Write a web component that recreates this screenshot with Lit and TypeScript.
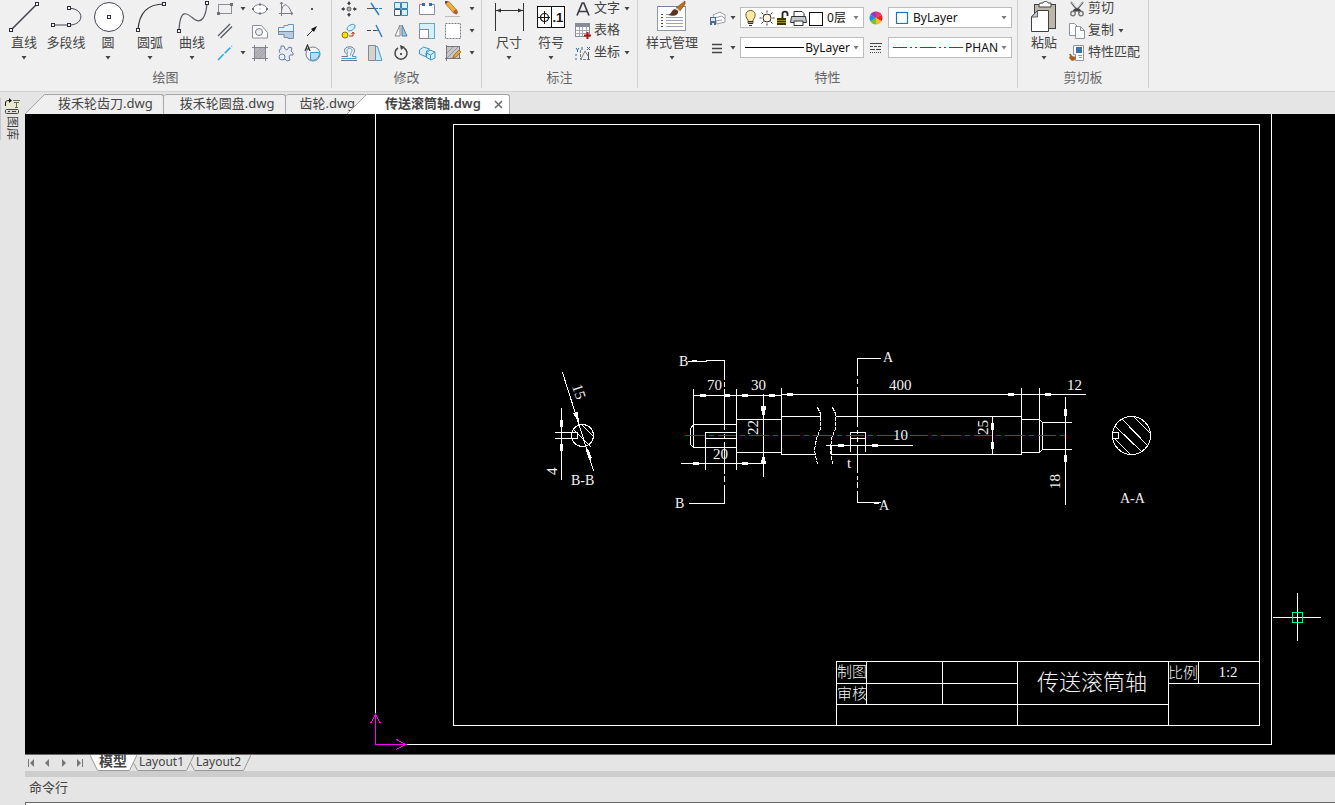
import { LitElement, html, svg, css, nothing, TemplateResult, SVGTemplateResult } from "lit";
import { customElement, property, state } from "lit/decorators.js";
import { classMap } from "lit/directives/class-map.js";

type Art = SVGTemplateResult;

const caret = html`<svg class="caret" width="6" height="4" viewBox="0 0 6 4" aria-hidden="true"><path d="M0.5 0h5L3 3.5z" fill="#444"/></svg>`;

/* ---------- large icons, 34 x 34 ---------- */
const node = (x: number, y: number): Art =>
  svg`<rect x=${x - 1.5} y=${y - 1.5} width="3" height="3" fill="#fff" stroke="#2c2c36"/>`;

const big: Record<string, Art> = {
  line: svg`<path d="M4.500 29.500L29.500 4.500" stroke="#454555" stroke-width="1.6"/>${node(4, 30)}${node(30, 4)}`,
  pline: svg`<path d="M4 25H22M20 8.500h3c12 2 12 15-1 16.500" fill="none" stroke="#454555"/>${node(4, 25)}${node(20, 25)}${node(20, 8)}`,
  circle: svg`<circle cx="18" cy="17" r="14.500" fill="#fff" stroke="#454555"/>${node(18, 17)}`,
  arc: svg`<path d="M5 30C6 14 14 4 31 4" fill="none" stroke="#333" stroke-width="1.200"/>${node(5, 30)}${node(31, 4)}`,
  curve: svg`<path d="M4 31C5 6 13 14 19 19c7 5 12-1 13-16" fill="none" stroke="#555566" stroke-width="1.200"/>${node(4, 31)}${node(32, 3)}`,
  dim: svg`<path d="M3.500 3V31M31.500 3V31M4 10.500H31" stroke="#333" /><path d="M4 10.500l5-2v4zM31 10.500l-5-2v4z" fill="#333"/>`,
  symbol: svg`<rect x="3.500" y="6.500" width="27" height="21" fill="#fff" stroke="#111"/><path d="M17.500 7V27M4 17.500H16M10.500 11V24" stroke="#111"/><circle cx="10.500" cy="17.500" r="4" fill="none" stroke="#111" stroke-width="1.200"/><text x="18.500" y="22" font-family="Liberation Sans" font-weight="bold" font-size="13" fill="#111">.1</text>`,
  style: svg`<rect x="2.500" y="6.500" width="28" height="24" fill="#fff" stroke="#8a98ac"/><path d="M3 6.500H30" stroke="#6f83a0"/><path d="M6 14.500H8M6 17.500H8M6 20.500H8M6 23.500H8M6 26.500H8" stroke="#3b4b70"/><path d="M11 14.500H19M11 17.500H28M11 20.500H28M11 23.500H28M11 26.500H28" stroke="#98a3bb"/><path d="M30 1L21 8l4 3 5-7z" fill="#c07020" stroke="#70380c" stroke-width=".6"/><path d="M22 8l3 3-2 1-3-3z" fill="#d8d8d8"/><path d="M20 9c-4 1-3 5-7 6 6 2 11 0 10-4z" fill="#5a3420"/>`,
  paste: svg`<rect x="7.500" y="4.500" width="21" height="24" fill="#beb6a6" stroke="#3b4048"/><path d="M14 3h2c0-2 5-2 5 0h3v4H12V4z" fill="#fff" stroke="#3b4048"/><path d="M10.500 10.500H21.500V31.500H4.500V17z" fill="#fff" stroke="#3b4048"/><path d="M10.500 10.500V17H4.500z" fill="#ccc" stroke="#3b4048" stroke-width=".8"/>`,
};

/* ---------- small icons, 18 x 18 ---------- */
const small: Record<string, Art> = {
  rect: svg`<rect x="2.500" y="4.500" width="13" height="9" fill="none" stroke="#8a8f9a"/><path d="M1 12h3v3H1zM14 3h3v3h-3z" fill="#6b707c"/>`,
  ellipse: svg`<ellipse cx="9" cy="9" rx="7" ry="4.500" fill="#fff" stroke="#7e8390"/><path d="M8 3.500h2v2H8zM8 12.500h2v2H8zM1 8h2v2H1zM15 8h2v2h-2z" fill="#6a6f7c"/><path d="M8.500 9h1" stroke="#888"/>`,
  graph: svg`<path d="M4.500 2V16M2 13.500H16" stroke="#777c88"/><path d="M4.500 11C6 2 11 3 14.500 13M3 4l1.500-2L6 4M14 12l2 1.500-2 1.500" fill="none" stroke="#777c88"/>`,
  point: svg`<rect x="8" y="8" width="2" height="2" fill="#555"/>`,
  parallel: svg`<path d="M2 14L14 2M4.500 16L16 4.500" stroke="#555a66" stroke-width="1.300"/>`,
  contour: svg`<path d="M1.500 3.500h9l6 7v5.500h-15z" fill="#fff" stroke="#8a8f9c"/><circle cx="8" cy="10" r="3.500" fill="#eee" stroke="#777c88"/>`,
  shaft: svg`<path d="M1 5h6V3h4v13H7v-3H1zM11 2h6v15h-6z" fill="#e3f3fc"/><path d="M1 10h6v3H1zM7 10h4v6H7zM11 10h6v6h-6z" fill="#b9cbe0"/><path d="M1.500 5.500h5.500v-2h4V2.500h5.500v14H11v-1H7v-3H1.500z" fill="none" stroke="#7690ae"/><path d="M1 9.500H17" stroke="#2f9fe0"/>`,
  arrow: svg`<path d="M4 14l6-6" stroke="#333"/><path d="M14 4L8 7l3 3z" fill="#111"/>`,
  xline: svg`<path d="M2 16L16 2" stroke="#2ba6de" stroke-width="1.500" stroke-dasharray="8 1.500"/>`,
  hatch: svg`<rect x="3" y="3" width="12" height="12" fill="#b4b4b8"/><path d="M3.500 1v16M14.500 1v16M1 3.500h16M1 14.500h16" stroke="#808490"/><path d="M4 10l6-6M4 14L14 4M8 14l6-6" stroke="#999" stroke-width=".7"/>`,
  gear: svg`<path d="M2 6l2-1V2h3l1 3 2 1 2-3 3 1-1 3 2 2v2l-3 0-1 2 1 3-3 1-2-2-2 1" fill="#e9edf6" stroke="#6f7f9f"/><path d="M2 6l1 3" stroke="#6f7f9f"/><circle cx="5" cy="13" r="3" fill="#e8f2fa" stroke="#6f7f9f"/>`,
  region: svg`<circle cx="10" cy="10" r="7" fill="#f4f4f4" stroke="#777c88"/><path d="M7.500 8.500h9c0 5-4 9-9 7.500z" fill="#b9def3" stroke="#3a9cd0"/><path d="M2 7l2.500-6L7 7M3 5h3" fill="none" stroke="#333" stroke-width="1.200"/>`,

  move: svg`<circle cx="9" cy="9" r="2" fill="#aaa" stroke="#666"/><path d="M9 2v3M9 13v3M2 9h3M13 9h3" stroke="#3c414c" stroke-width="1.600"/><path d="M7 4l2-3 2 3zM7 14l2 3 2-3zM4 7L1 9l3 2zM14 7l3 2-3 2z" fill="#3c414c"/>`,
  trim: svg`<path d="M1 8.500h7" stroke="#555"/><path d="M9 8.500h8" stroke="#2b7cc6" stroke-dasharray="3 1"/><path d="M5 3l8 12" stroke="#2b7cc6" stroke-width="1.400"/>`,
  array: svg`<path d="M2.500 2.500h6v6h-6zM9.500 2.500h6v6h-6zM9.500 9.500h6v6h-6z" fill="#d5effb" stroke="#3a84b4"/><path d="M2.500 9.500h6v6h-6z" fill="#fff" stroke="#456"/>`,
  breakIt: svg`<path d="M5 4.500H1.500v10h15v-10H13" fill="#fff" stroke="#878c98"/><path d="M4 3h3v3H4zM11 3h3v3h-3z" fill="#2277bb"/>`,
  erase: svg`<path d="M2 2l3-.5 8 9-3 3-8-9z" fill="#f2a93b" stroke="#9d6a1c" stroke-width=".7"/><path d="M1 1l3 .5-2.500 2.500z" fill="#333"/><path d="M9 12l3-3 2 3c0 2-2 3-3 2z" fill="#b2603a"/><path d="M1 16.500h15" stroke="#bbb"/>`,
  copy: svg`<circle cx="5" cy="13" r="3" fill="#f6e200" stroke="#92760a"/><path d="M7 7c0-4 9-7 8-2-1 3-7 6-8 2z" fill="#d5effb" stroke="#3f94c8"/><path d="M9 14h4v-3" fill="none" stroke="#b2382a"/><path d="M11.500 12l1.500-2 1.500 2" fill="none" stroke="#b2382a"/>`,
  extend: svg`<path d="M1 8.500h4M7 8.500h3" stroke="#444"/><path d="M10 8.500h3" stroke="#2b7cc6"/><path d="M10 3l6 12" stroke="#2b7cc6" stroke-width="1.400"/>`,
  mirror: svg`<path d="M8 3v11H3z" fill="#f8f8f8" stroke="#888"/><path d="M10 3v11h5z" fill="#9cc9e8" stroke="#4c7fa6"/>`,
  scale: svg`<rect x="1.500" y="1.500" width="15" height="15" fill="#d5effb" stroke="#5aaad2"/><rect x="1.500" y="7.500" width="9" height="9" fill="#fff" stroke="#888"/>`,
  marquee: svg`<rect x="1.500" y="1.500" width="15" height="15" fill="#fff" stroke="#777c88" stroke-dasharray="2 1"/>`,
  offset: svg`<path d="M1 16.500h16M1.500 12.500h6c0-3-3-3-3-6 0-5 10-5 10 0 0 3-2 3-2 6" fill="none" stroke="#6f7684"/><path d="M12.500 12.500H16v2H1.500M7 10c1-2 0-2 0-3.500 0-3 5-3 5 0 0 2-1.500 2-1.500 5" fill="none" stroke="#4b9fd2"/>`,
  chamfer: svg`<path d="M2.500 1.500h7v15h-7z" fill="#d3d3d3" stroke="#888"/><path d="M9.500 2.500h2l4.500 14H9.500" fill="#c8e8f8" stroke="#4b9fd2"/><path d="M9.500 1.500v15" stroke="#888"/>`,
  rotate: svg`<path d="M6 4a6 6 0 1 0 6 0" fill="none" stroke="#444" stroke-width="1.500"/><path d="M8 1l5 2-4 3z" fill="#444"/><path d="M8 9h2v2H8z" fill="#555"/>`,
  solid: svg`<path d="M1.500 6l4-3 6 2-3 2v6l-7-3zM8 9l4-3 5 2v6l-4 2-5-3z" fill="#d5effb" stroke="#3f94c8"/><path d="M8.500 9l4 2v5M12.500 11l4-3" fill="none" stroke="#3f94c8"/>`,
  editHatch: svg`<rect x="2.500" y="2.500" width="13" height="12" fill="#c4c6ca" stroke="#777"/><path d="M3 9l6-6M3 14L14 3M8 14l6-6" stroke="#999"/><path d="M2.500 1v16M1 14.500h16" stroke="#777"/><path d="M15 6l2 2-5 5-3 1 1-3z" fill="#e8a03a" stroke="#865514" stroke-width=".6"/>`,

  text: svg`<path d="M3 15.500L8.200 3h1.600L15 15.500M5 11.500h8" fill="none" stroke="#3c3c46" stroke-width="1.700"/>`,
  table: svg`<rect x="1.500" y="1.500" width="14" height="13" fill="#fff" stroke="#888c98"/><path d="M2 3.500h13" stroke="#888c98" stroke-width="3"/><path d="M2 8.500h13M2 11.500h13M5.500 5v9M8.500 5v9M12.500 5v9" stroke="#a4a8b2"/><path d="M10 13.500h7M13.500 10v7" stroke="#b01818" stroke-width="2"/>`,
  coord: svg`<path d="M6.500 6v9.500h10" fill="none" stroke="#777c88" stroke-dasharray="3 1"/><path d="M7 15l4-8 3 5" fill="none" stroke="#777c88"/><path d="M2 4l1.500 2L5 4M3.500 6v2M8 3v3M13 3l3 3M16 3l-3 3M2 10v2M2 14v2" fill="none" stroke="#2c6aa6"/><path d="M14.500 8v8" stroke="#555" fill="none"/>`,

  layers: svg`<path d="M5 6l7-3 5 3v7l-8 2z" fill="#fff" stroke="#9a9eaa"/><path d="M6 9l8-2 3 3M7 12l7-1" fill="none" stroke="#9a9eaa"/><rect x="2" y="8" width="6" height="8" fill="#4d6b92"/><path d="M3 9h4v3H3zM4 14h2v2H4z" fill="#dfe8f2"/>`,
  weight: svg`<path d="M4 5.500h10M4 9.500h10M4 13.500h10" stroke="#444" stroke-width="1.300"/>`,
  wheel: svg`<path d="M9 9V2.500A6.500 6.500 0 0 1 14.600 5.750z" fill="#e83a6a"/><path d="M9 9l5.600-3.250a6.500 6.500 0 0 1 0 6.500z" fill="#ee2020"/><path d="M9 9l5.600 3.250A6.500 6.500 0 0 1 9 15.500z" fill="#f4c020"/><path d="M9 9v6.500a6.500 6.500 0 0 1-5.600-3.250z" fill="#7cc02c"/><path d="M9 9l-5.600 3.250a6.500 6.500 0 0 1 0-6.500z" fill="#1f8fd6"/><path d="M9 9L3.400 5.750A6.500 6.500 0 0 1 9 2.500z" fill="#8a3cc4"/>`,
  linetype: svg`<path d="M3 4.500h12" stroke="#444"/><path d="M3 7.500h12" stroke="#444" stroke-dasharray="3 1"/><path d="M3 10.500h12" stroke="#444" stroke-dasharray="5 1"/><path d="M3 13.500h12" stroke="#444" stroke-dasharray="1 1"/>`,

  cut: svg`<path d="M3 2l8 10M15 2L7 12" stroke="#5a5f6a" stroke-width="2"/><path d="M3.500 2l6 7M14.500 2l-6 7" stroke="#eee" stroke-width=".8"/><circle cx="5" cy="13.500" r="2.200" fill="none" stroke="#777" stroke-width="1.400"/><circle cx="13" cy="13.500" r="2.200" fill="none" stroke="#777" stroke-width="1.400"/><path d="M6 9l3-1 3 1 1 2H5z" fill="#444"/>`,
  duplicate: svg`<path d="M1.500 1.500h5l3 3v9h-8z" fill="#fff" stroke="#8e939e"/><path d="M7.500 4.500h5l4 4v8h-9z" fill="#fff" stroke="#8e939e"/><path d="M12.500 4.500v4h4" fill="none" stroke="#8e939e"/>`,
  match: svg`<path d="M5.500 1.500h10v15h-8v-6h-2z" fill="#fff" stroke="#8e939e"/><path d="M8 3h6v6H8z" fill="#3d73ad"/><path d="M10 11.500h4M11 13.500h3" stroke="#8e939e"/><path d="M1 10l2 0 1 2 4 1-1 3-3 1-3-3 1-2z" fill="#a8641c"/>`,
};

const sicon = (name: string) =>
  html`<svg width="18" height="18" viewBox="0 0 18 18" fill="none" aria-hidden="true">${small[name]}</svg>`;

const shared = css`
  :host { font-family: "Noto Sans", "Noto Sans CJK SC", sans-serif; font-size: 13px; color: #444; }
  * { box-sizing: border-box; }
  svg { display: block; flex: none; }
  button { font: inherit; color: inherit; background: none; border: 0; padding: 0; margin: 0; cursor: default; }
`;

/* ---------- ribbon ---------- */
@customElement("ribbon-panel")
class RibbonPanel extends LitElement {
  @property() label = "";
  static styles = [shared, css`
    :host { display: flex; flex-direction: column; border-right: 1px solid #d2d2d2; flex: none; }
    .body { display: flex; height: 62px; }
    .title { line-height: 18px; padding-top: 6px; text-align: center; color: #666; }
  `];
  render() {
    return html`<div class="body"><slot></slot></div><div class="title">${this.label}</div>`;
  }
}

@customElement("cad-ribbon")
class CadRibbon extends LitElement {
  static styles = [shared, css`
    :host { display: flex; height: 92px; padding-bottom: 3px; background: #f0f0f0; border-bottom: 1px solid #d2d2d2; overflow: hidden; }
    .big { width: 42px; display: flex; flex-direction: column; align-items: center; line-height: 17px; white-space: nowrap; }
    .big.wide { width: 54px; }
    .big .caret { margin-top: 5px; }
    .lead3 { padding-left: 3px; }
    .lead5 { padding-left: 5px; }
    .lead6 { padding-left: 6px; }
    .lead7 { padding-left: 7px; }
    .row { display: flex; }
    .grid { display: grid; grid-auto-rows: 18px; row-gap: 4px; }
    .draw { grid-template-columns: 18px 17px 26px 26px 28px; padding-left: 3px; }
    .edit { grid-template-columns: 26px 26px 26px 26px 18px 19px; padding-left: 8px; }
    .drop { display: flex; align-items: center; justify-content: center; }
    .list { display: flex; flex-direction: column; gap: 4px; padding: 0 8px 0 3px; }
    .list.notes { padding: 0 7px 0 2px; }
    .item { display: flex; align-items: center; height: 18px; gap: 2px; white-space: nowrap; }
    .item span { line-height: 14px; padding-bottom: 4px; }
    .item .caret { margin-left: 2px; }
    .props { display: grid; grid-template-columns: 18px 14px 124px 24px 124px; grid-auto-rows: 21px; row-gap: 9px; align-items: center; padding: 7px 5px 0 9px; }
    .mid { display: flex; justify-content: center; }
    .field { display: flex; align-items: center; height: 21px; background: #fff; border: 1px solid #bcbcbc; padding: 0 4px; color: #111; font-size: 12px; }
    .field .caret { opacity: .7; }
    select { appearance: none; flex: 1; min-width: 0; border: 0; background: none; font: inherit; color: inherit; padding: 0; margin: 0; }
    select.start { padding-left: 2px; }
    select.end { text-align: right; text-align-last: right; padding-right: 3px; }
  `];

  private big(icon: string, label: string, drop = true, wide = false) {
    return html`<button class=${classMap({ big: true, wide })}>
      <svg width="34" height="34" viewBox="0 0 34 34" aria-hidden="true">${big[icon]}</svg>
      <span>${label}</span>${drop ? caret : nothing}</button>`;
  }
  private tool(icon: string, label: string) {
    return html`<button aria-label=${label}>${sicon(icon)}</button>`;
  }
  private drop(show = true) {
    return show ? html`<button class="drop" aria-label="更多">${caret}</button>` : html`<span></span>`;
  }
  private item(icon: string, label: string, drop = false) {
    return html`<button class="item">${sicon(icon)}<span>${label}</span>${drop ? caret : nothing}</button>`;
  }

  render() {
    return html`
      <ribbon-panel label="绘图">
        <div class="row lead3">
          ${this.big("line", "直线")}${this.big("pline", "多段线", false)}${this.big("circle", "圆")}${this.big("arc", "圆弧")}${this.big("curve", "曲线")}
        </div>
        <div class="grid draw">
          ${this.tool("rect", "矩形")}${this.drop()}${this.tool("ellipse", "椭圆")}${this.tool("graph", "函数")}${this.tool("point", "点")}
          ${this.tool("parallel", "平行线")}${this.drop(false)}${this.tool("contour", "轮廓")}${this.tool("shaft", "轴")}${this.tool("arrow", "箭头")}
          ${this.tool("xline", "中心线")}${this.drop()}${this.tool("hatch", "填充")}${this.tool("gear", "齿轮")}${this.tool("region", "局部")}
        </div>
      </ribbon-panel>
      <ribbon-panel label="修改">
        <div class="grid edit">
          ${this.tool("move", "移动")}${this.tool("trim", "裁剪")}${this.tool("array", "阵列")}${this.tool("breakIt", "打断")}${this.tool("erase", "删除")}${this.drop()}
          ${this.tool("copy", "复制")}${this.tool("extend", "延伸")}${this.tool("mirror", "镜像")}${this.tool("scale", "缩放")}${this.tool("marquee", "选择")}${this.drop()}
          ${this.tool("offset", "等距")}${this.tool("chamfer", "倒角")}${this.tool("rotate", "旋转")}${this.tool("solid", "分解")}${this.tool("editHatch", "编辑填充")}${this.drop()}
        </div>
      </ribbon-panel>
      <ribbon-panel label="标注">
        <div class="row lead6">${this.big("dim", "尺寸")}${this.big("symbol", "符号")}</div>
        <div class="list notes">${this.item("text", "文字", true)}${this.item("table", "表格")}${this.item("coord", "坐标", true)}</div>
      </ribbon-panel>
      <ribbon-panel label="特性">
        <div class="row lead7">${this.big("style", "样式管理", true, true)}</div>
        <div class="props">
          ${this.tool("layers", "图层")}${this.drop()}
          <div class="field">
            <svg width="80" height="18" viewBox="0 0 80 18" aria-hidden="true">
              <path d="M3 11C-1 6 1 1.500 5.500 1.500S12 6 8 11v3H3z" fill="#fdeaa0" stroke="#6b5836"/><path d="M3 12.500h5M3 14.500h5M4 16.500h3" stroke="#333"/>
              <circle cx="22" cy="9" r="4" fill="#fff6dd" stroke="#333"/><path d="M22 1.500v2M22 14.500v2M14.500 9h2M27.500 9h2M16.500 3.500l2 2M25.500 12.500l2 2M16.500 14.500l2-2M25.500 5.500l2-2" stroke="#333"/>
              <path d="M32 9h9v7h-9z" fill="#3c3500"/><path d="M32 11.500h9M32 13.500h9" stroke="#9c8c20"/><path d="M37.500 9V4.500c0-2.500 5-2.500 5 0V7" fill="none" stroke="#222" stroke-width="1.800"/>
              <path d="M49 7V2.500h8l2 2V7" fill="#fff" stroke="#333"/><path d="M46.500 7.500h14l1 6h-16z" fill="#c5c9d0" stroke="#333"/><path d="M49 12h9v4.500h-9z" fill="#fff" stroke="#333"/>
              <rect x="64.500" y="3.500" width="13" height="13" fill="#fff" stroke="#111"/>
            </svg>
            <select class="start" aria-label="当前图层"><option>0层</option></select>${caret}
          </div>
          <span class="mid">${this.tool("wheel", "颜色")}</span>
          <div class="field">
            <svg width="18" height="13" viewBox="0 0 18 13" aria-hidden="true"><rect x="3.500" y="1.500" width="11" height="11" fill="#fff" stroke="#1477cc" stroke-width="1.200"/></svg>
            <select class="start" aria-label="颜色"><option>ByLayer</option></select>${caret}
          </div>
          ${this.tool("weight", "线宽")}${this.drop()}
          <div class="field">
            <svg width="59" height="1" viewBox="0 0 59 1" aria-hidden="true"><path d="M0 .5h59" stroke="#000"/></svg>
            <select class="end" aria-label="线宽"><option>ByLayer</option></select>${caret}
          </div>
          <span class="mid">${this.tool("linetype", "线型")}</span>
          <div class="field">
            <svg width="70" height="1" viewBox="0 0 70 1" aria-hidden="true"><path d="M0 .5h14m3 0h2m3 0h2m3 0h16m3 0h2m3 0h2m3 0h14" stroke="#f00000"/></svg>
            <select class="end" aria-label="线型"><option>PHAN</option></select>${caret}
          </div>
        </div>
      </ribbon-panel>
      <ribbon-panel label="剪切板">
        <div class="row lead5">${this.big("paste", "粘贴")}</div>
        <div class="list">${this.item("cut", "剪切")}${this.item("duplicate", "复制", true)}${this.item("match", "特性匹配")}</div>
      </ribbon-panel>`;
  }
}

/* ---------- drawing ---------- */
const hArrow = (x: number, y: number) => svg`<rect x=${x} y=${y - 1} width="6" height="3"/>`;
const vArrow = (x: number, y: number) => svg`<rect x=${x - 1} y=${y} width="3" height="7"/>`;

@customElement("cad-drawing")
class CadDrawing extends LitElement {
  static styles = css`
    :host { display: block; background: #000; overflow: hidden; min-height: 0; }
    svg { display: block; width: 100%; height: 100%; }
    .ink { fill: none; stroke: #fff; stroke-linecap: square; shape-rendering: crispEdges; }
    .dashed { stroke-linecap: butt; stroke-dasharray: 4 1; }
    .solid { fill: #fff; shape-rendering: crispEdges; }
    .axis { fill: none; stroke: #f00; shape-rendering: crispEdges; }
    .ucs { fill: none; stroke: #f0f; shape-rendering: crispEdges; }
    .pick { fill: none; stroke: #00ff80; shape-rendering: crispEdges; }
    .dim { fill: #f4f4f4; font: 15px "Liberation Serif", serif; }
    .mark { fill: #f4f4f4; font: 14px "Liberation Serif", serif; }
    .cell { fill: #f4f4f4; font: 300 15px "Noto Sans CJK SC", sans-serif; }
    .name { fill: #f4f4f4; font: 300 22px "Noto Sans CJK SC", sans-serif; }
  `;
  render() {
    return html`<svg role="img" aria-label="传送滚筒轴">
      <g transform="translate(-25 -114)">
        <g transform="translate(.5 .5)">
          <g class="ink">
            <path d="M375 100V744H1271V100M453 124H1259V725H453Z"/>
            <path d="M836 725V661H1259M836 683H1017M836 704H1168M866 661V704M942 661V704M1017 661V725M1168 661V725M1198 661V683M1168 683H1259"/>
            <path d="M688 361H706M706 360H724V379M724 382V386M724 389V429M724 434V438M724 442V473M724 476V481M724 485V503H689"/>
            <path d="M693 395H781M693 389V447M736 389V469M736 424H693L690 428V444L693 447H736M736 432H705V469M705 438H736"/>
            <path d="M736 419H781M736 452H781M763 394V476M681 463H763M781 388V454"/>
            <path d="M781 394H1085M781 416H820M836 416H1021M781 454H815M831 454H1021M831 446V454"/>
            <path class="dashed" d="M817 407L820 413V428L816 438L814 450L817 464M832 407L835 413V428L831 438L830 450L832 464"/>
            <path d="M880 358H857V375M857 379V383M857 387V426M857 430V433M857 437V441M857 445V472M857 476V479M857 482V487M857 491V502H880"/>
            <path d="M850 451V432H865V451M850 438H865M826 445H912"/>
            <path d="M1021 388V454M1039 388V452M1021 419H1039L1042 422H1071M1021 452H1039L1042 449H1071M1042 422V449M1065 397V504M992 416V454"/>
            <path d="M555 432H577V438H555M561 408V479M562 372L593 470M582 425L593 436M574 430L590 446"/>
            <circle cx="582" cy="435" r="11"/>
            <circle cx="1131" cy="435" r="19"/>
            <path d="M1134 417L1149 432M1122 419L1147 445M1115 426L1141 451M1115 439L1130 454M1112 432H1118V438H1112Z"/>
            <path d="M1273 617H1320M1297 593V640"/>
          </g>
          <path class="axis" d="M684 435H1065" stroke-dasharray="20 4 5 4 18 4 5 4"/>
          <path class="ucs" d="M370 723L375 714L380 723M375 714V744H405M396 739L405 744L396 749"/>
          <rect class="pick" x="1292" y="612" width="10" height="10"/>
        </g>
        <g class="solid">
          ${[[700, 395], [724, 395], [742, 395], [769, 395], [693, 463], [742, 463], [787, 394], [1008, 394], [1045, 394], [838, 445], [872, 445]].map(([x, y]) => hArrow(x, y))}
          ${[[1065, 409], [1065, 455], [992, 423], [992, 442], [561, 420], [561, 444]].map(([x, y]) => vArrow(x, y))}
          <path d="M761 406h5l-1 9h-3zM762 457h3l1 7h-5zM573 413l5-1 1 11zM586 450l2-1 4 9-3 2zM692 360h5v2h-5zM874 502h5v2h-5z"/>
        </g>
        <g class="dim">
          <text x="707" y="390">70</text><text x="751" y="390">30</text><text x="713" y="459">20</text>
          <text x="889" y="390">400</text><text x="893" y="440">10</text><text x="1067" y="390">12</text>
          <text x="847" y="468">t</text>
          <text transform="translate(758 435) rotate(-90)">22</text>
          <text transform="translate(988 435) rotate(-90)">25</text>
          <text transform="translate(1060 489) rotate(-90)">18</text>
          <text transform="translate(557 475) rotate(-90)">4</text>
          <text transform="translate(572 386) rotate(72)">15</text>
        </g>
        <g class="mark">
          <text x="679" y="366">B</text><text x="675" y="508">B</text><text x="883" y="362">A</text><text x="879" y="510">A</text>
          <text x="571" y="485">B-B</text><text x="1120" y="503">A-A</text>
        </g>
        <g class="cell">
          <text x="837" y="677">制图</text><text x="837" y="699">审核</text><text x="1168" y="678">比例</text>
        </g>
        <text class="dim" x="1228" y="677" text-anchor="middle">1:2</text>
        <text class="name" x="1092" y="690" text-anchor="middle">传送滚筒轴</text>
      </g>
    </svg>`;
  }
}

/* ---------- application ---------- */
@customElement("app-root")
class AppRoot extends LitElement {
  @state() private file = 3;
  @state() private sheet = 0;

  static styles = [shared, css`
    :host { display: flex; flex-direction: column; height: 100vh; background: #e5e5e5; overflow: hidden; }
    .work { flex: 1; display: flex; min-height: 0; }
    .side { width: 25px; flex: none; padding-top: 6px; }
    .library { display: flex; flex-direction: column; align-items: center; width: 22px; border-left: 1px solid #c8c8c8; font-size: 12px; line-height: 14px; }
    .library span { writing-mode: vertical-rl; text-orientation: sideways; }
    .main { flex: 1; min-width: 0; display: flex; flex-direction: column; }
    .files { display: flex; height: 22px; padding-top: 2px; flex: none; }
    .file { display: flex; height: 20px; }
    .face { display: flex; align-items: center; height: 20px; background: #efefef; border: solid #a5a5a5; border-width: 1px 1px 0 0; border-radius: 3px 3px 0 0; line-height: 16px; padding: 0 11px 3px 16px; white-space: nowrap; }
    .slanted .face { border-top-left-radius: 0; padding-left: 13px; padding-right: 10px; }
    .tight .face { padding-left: 13px; }
    .on .face { background: #fff; font-weight: 600; padding: 0 5px 3px 18px; gap: 12px; }
    .on { margin-left: -20px; position: relative; }
    .close { display: flex; padding-top: 2px; }
    cad-drawing { flex: 1; }
    .sheets { display: flex; height: 17px; flex: none; border-top: 1px solid #666; font-size: 12px; line-height: 14px; }
    .nav { display: flex; align-items: center; gap: 8px; padding-left: 2px; width: 65px; }
    .nav button { display: flex; }
    .sheet { display: flex; height: 16px; margin-right: -7px; }
    .sheet span { height: 16px; padding: 0 2px 0 1px; border-bottom: 1px solid #999; }
    .sheet.active { position: relative; font-weight: 600; font-size: 14px; line-height: 12px; }
    .sheet.active span { background: #fff; }
    .splitter { height: 6px; background: #cdcdcd; flex: none; }
    .command { height: 28px; flex: none; overflow: hidden; }
    .command label { display: block; line-height: 20px; padding: 0 4px 5px; }
    .command input { display: block; width: 100%; height: 22px; border: 1px solid #666; border-width: 1px 0 0 1px; background: #fff; font: inherit; padding: 0 4px; outline: 0; }
  `];

  private slant(fill: string) {
    return html`<svg width="20" height="20" viewBox="0 0 20 20" aria-hidden="true"><path d="M0 20L20 .5V20z" fill=${fill}/><path d="M0 20L19.500 .5H20" fill="none" stroke="#a5a5a5"/></svg>`;
  }

  private fileTab(name: string, i: number): TemplateResult {
    const on = i === this.file;
    const slanted = i === 0 || on;
    return html`<div class=${classMap({ file: true, on, slanted, tight: i === 2 })}>
      ${slanted ? this.slant(on ? "#fff" : "#efefef") : nothing}
      <div class="face">
        <button @click=${() => (this.file = i)}>${name}</button>
        ${on ? html`<button class="close" aria-label="关闭"><svg width="11" height="11" viewBox="0 0 11 11"><path d="M2 2l7 7M9 2L2 9" stroke="#666" stroke-width="1.500"/></svg></button>` : nothing}
      </div>
    </div>`;
  }

  private sheetTab(name: string, i: number): TemplateResult {
    const active = i === this.sheet;
    return html`<button class=${classMap({ sheet: true, active })} @click=${() => (this.sheet = i)}>
      <svg width="8" height="16" viewBox="0 0 8 16" aria-hidden="true"><path d="M0 0L8 16V0z" fill=${active ? "#fff" : "none"}/><path d=${active ? "M0 0L7.500 15.500" : "M3.500 8L7.500 15.500"} stroke="#999"/></svg>
      <span>${name}</span>
      <svg width="8" height="16" viewBox="0 0 8 16" aria-hidden="true"><path d="M8 0L0 16V0z" fill=${active ? "#fff" : "none"}/><path d="M8 0L.5 15.500" stroke="#999"/></svg>
    </button>`;
  }

  private nav(label: string, d: string) {
    return html`<button aria-label=${label}><svg width="8" height="8" viewBox="0 0 8 8"><path d=${d} fill="#777"/></svg></button>`;
  }

  render() {
    return html`
      <cad-ribbon></cad-ribbon>
      <div class="work">
        <aside class="side">
          <button class="library">
            <svg width="16" height="18" viewBox="0 0 16 18" aria-hidden="true">
              <rect x="1" y="1" width="15" height="16" fill="#e9e9d2"/>
              <path d="M1.500 8V5c0-2 1-2.500 4-2.500" fill="none" stroke="#111"/><path d="M5 0l3 2.500L5 5z" fill="#111"/>
              <path d="M9 2.500h7M10 4.500h5M12.500 4v5M11 9.500h3" stroke="#666"/>
              <rect x="1.500" y="11.500" width="13" height="4" rx="1" fill="#ddd" stroke="#444"/><path d="M4 13.500h2M8 13.500h4" stroke="#444"/>
            </svg>
            <span>图库</span>
          </button>
        </aside>
        <main class="main">
          <nav class="files">${["拨禾轮齿刀.dwg", "拨禾轮圆盘.dwg", "齿轮.dwg", "传送滚筒轴.dwg"].map((n, i) => this.fileTab(n, i))}</nav>
          <cad-drawing></cad-drawing>
          <nav class="sheets">
            <div class="nav">
              ${this.nav("第一页", "M1 0h1v8H1zM7 0v8L3 4z")}${this.nav("上一页", "M6 0v8L2 4z")}${this.nav("下一页", "M3 0v8l4-4z")}${this.nav("最后一页", "M7 0h1v8H7zM2 0v8l4-4z")}
            </div>
            ${["模型", "Layout1", "Layout2"].map((n, i) => this.sheetTab(n, i))}
          </nav>
          <div class="splitter"></div>
          <section class="command">
            <label for="cmd">命令行</label>
            <input id="cmd" type="text" />
          </section>
        </main>
      </div>`;
  }
}
